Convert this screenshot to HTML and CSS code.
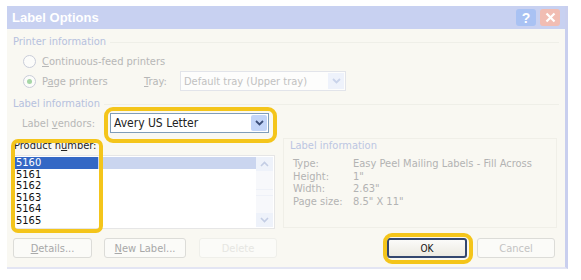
FILE: index.html
```html
<!DOCTYPE html>
<html lang="en">
<head>
  <meta charset="UTF-8">
  <title>Label Options</title>
  <link rel="stylesheet" href="styles.css">
</head>
<body>
  <div class="dialog">
    <div class="titlebar">
      <span class="title">Label Options</span>
      <span class="tb-btn help">?</span>
      <span class="tb-btn close">
        <svg width="11" height="11" viewBox="0 0 11 11"><path d="M1.5 1.5 L9.5 9.5 M9.5 1.5 L1.5 9.5" stroke="#fff" stroke-width="2.2" fill="none"/></svg>
      </span>
    </div>

    <div class="group-head">Printer information</div>
    <div class="row">
      <span class="radio"></span>
      <span><u>C</u>ontinuous-feed printers</span>
    </div>
    <div class="row">
      <span class="radio on"></span>
      <span class="radio-text">P<u>a</u>ge printers</span>
      <span class="tray-label"><u>T</u>ray:</span>
      <span class="combo tray-combo">
        <span class="combo-text">Default tray (Upper tray)</span>
        <span class="combo-btn">
          <svg width="9" height="6" viewBox="0 0 9 6"><path d="M1 1 L4.5 4.5 L8 1" stroke="#c9d3ea" stroke-width="1.8" fill="none"/></svg>
        </span>
      </span>
    </div>

    <div class="group-head">Label information</div>
    <div class="row vendors">
      <span class="vendors-label">Label <u>v</u>endors:</span>
      <span class="combo vendor-combo">
        <span class="combo-text">Avery US Letter</span>
        <span class="combo-btn">
          <svg width="9" height="6" viewBox="0 0 9 6"><path d="M1 1 L4.5 4.5 L8 1" stroke="#3c4f7a" stroke-width="1.8" fill="none"/></svg>
        </span>
      </span>
    </div>

    <div class="lower">
      <div class="products">
        <div class="products-label">Product n<u>u</u>mber:</div>
        <div class="listbox">
          <ul class="items">
            <li class="selected">5160</li>
            <li>5161</li>
            <li>5162</li>
            <li>5163</li>
            <li>5164</li>
            <li>5165</li>
          </ul>
          <div class="scrollbar">
            <span class="sb-btn">
              <svg width="9" height="6" viewBox="0 0 9 6"><path d="M1 5 L4.5 1.5 L8 5" stroke="#c3cde4" stroke-width="1.6" fill="none"/></svg>
            </span>
            <span class="sb-track"><span class="sb-grip"></span></span>
            <span class="sb-btn">
              <svg width="9" height="6" viewBox="0 0 9 6"><path d="M1 1 L4.5 4.5 L8 1" stroke="#c3cde4" stroke-width="1.6" fill="none"/></svg>
            </span>
          </div>
        </div>
      </div>
      <div class="info">
        <div class="info-head">Label information</div>
        <div class="info-grid">
          <span>Type:</span><span>Easy Peel Mailing Labels - Fill Across</span>
          <span>Height:</span><span>1"</span>
          <span>Width:</span><span>2.63"</span>
          <span>Page size:</span><span>8.5" X 11"</span>
        </div>
      </div>
    </div>

    <div class="buttons">
      <span class="btn details"><u>D</u>etails...</span>
      <span class="btn new-label"><u>N</u>ew Label...</span>
      <span class="btn delete">Delete</span>
      <span class="btn ok">OK</span>
      <span class="btn cancel">Cancel</span>
    </div>

    <div class="hl hl-vendor"></div>
    <div class="hl hl-products"></div>
    <div class="hl hl-ok"></div>
  </div>
</body>
</html>
```

FILE: styles.css
```css
body {
  margin: 0;
  background: #fff;
}
.dialog {
  position: relative;
  margin: 6px 0 0 7px;
  width: 561px;
  height: 263px;
  box-sizing: border-box;
  background: #f9f8f2;
  border-right: 3px solid #c9cfee;
  border-bottom: 2px solid #e3e5f3;
  display: flex;
  flex-direction: column;
  font-family: "DejaVu Sans Condensed", "DejaVu Sans", sans-serif;
  font-size: 11px;
  color: #b7b7b7;
}
u {
  text-decoration: underline;
}

/* title bar */
.titlebar {
  height: 23px;
  background: #c8d1f1;
  display: flex;
  align-items: center;
  padding: 0 5px 0 5px;
}
.title {
  flex: 1;
  font-family: "Liberation Sans", sans-serif;
  font-weight: bold;
  font-size: 13px;
  color: #fff;
}
.tb-btn {
  width: 20px;
  height: 17px;
  border-radius: 3px;
  display: flex;
  align-items: center;
  justify-content: center;
  color: #fff;
  font-family: "Liberation Sans", sans-serif;
  font-weight: bold;
  font-size: 14px;
}
.help {
  background: #a9c2f3;
  margin-right: 4px;
}
.close {
  background: #f1bdb3;
}

/* groups */
.group-head {
  margin-top: 6px;
  height: 14px;
  line-height: 14px;
  padding-left: 6px;
  color: #b6c1de;
  display: flex;
  align-items: center;
  gap: 4px;
}
.group-head::after {
  content: "";
  flex: 1;
  height: 1px;
  margin-right: 6px;
  background: #efefe8;
}
.row {
  height: 20px;
  display: flex;
  align-items: center;
  padding-left: 16px;
}
.group-head + .row {
  margin-top: 2px;
}
.radio {
  width: 11px;
  height: 11px;
  border: 1px solid #c9cdd9;
  border-radius: 50%;
  background: #fcfcfa;
  margin-right: 6px;
  display: flex;
  align-items: center;
  justify-content: center;
}
.radio.on::after {
  content: "";
  width: 5px;
  height: 5px;
  border-radius: 50%;
  background: #a6d6a6;
}
.radio-text {
  width: 102px;
}
.tray-label {
  width: 36px;
}

/* combo boxes */
.combo {
  display: flex;
  align-items: center;
  box-sizing: border-box;
  background: #fff;
}
.combo-text {
  flex: 1;
  padding-left: 3px;
  white-space: nowrap;
}
.combo-btn {
  width: 16px;
  align-self: stretch;
  margin: 1px;
  display: flex;
  align-items: center;
  justify-content: center;
}
.tray-combo {
  width: 166px;
  height: 20px;
  border: 1px solid #e2e4ea;
  background: #fdfdfc;
}
.tray-combo .combo-text {
  color: #c1c1c1;
}
.tray-combo .combo-btn {
  background: #eef2fb;
}
.vendors {
  margin-top: 5px;
  padding-left: 15px;
}
.vendors-label {
  width: 88px;
}
.vendor-combo {
  width: 159px;
  height: 20px;
  border: 1px solid #7f9db9;
  font-size: 12px;
  color: #222;
}
.vendor-combo .combo-btn {
  background: #c3d5f8;
  border-radius: 2px;
}

/* lower part */
.lower {
  margin-top: 5px;
  display: flex;
  padding-left: 5px;
  gap: 8px;
}
.products {
  width: 263px;
}
.products-label {
  height: 16px;
  line-height: 16px;
  padding-left: 2px;
  font-size: 11px;
  color: #222;
}
.listbox {
  margin-top: 1px;
  height: 74px;
  box-sizing: border-box;
  border: 1px solid #e6e6e6;
  background: #fff;
  display: flex;
}
.items {
  flex: 1;
  list-style: none;
  margin: 0;
  padding: 1px 0 0 2px;
  font-size: 11px;
  color: #111;
}
.items li {
  height: 11.5px;
  line-height: 11.5px;
  padding-left: 1px;
}
.items li.selected {
  color: #fff;
  background: linear-gradient(90deg, #3468c5 0 83px, #cad5ef 83px);
}
.scrollbar {
  width: 17px;
  margin: 1px 1px 1px 0;
  background: #f7f8fb;
  display: flex;
  flex-direction: column;
}
.sb-btn {
  height: 14px;
  background: #eef2fa;
  display: flex;
  align-items: center;
  justify-content: center;
}
.sb-track {
  flex: 1;
  display: flex;
  align-items: center;
}
.sb-grip {
  width: 100%;
  height: 5px;
  border-top: 1px solid #eef1f8;
  border-bottom: 1px solid #eef1f8;
}
.info {
  width: 274px;
  height: 90px;
  box-sizing: border-box;
  border: 1px solid #f0efe8;
  padding: 0 0 0 6px;
}
.info-head {
  height: 14px;
  line-height: 14px;
  color: #bcc6e2;
}
.info-grid {
  margin-top: 5px;
  padding-left: 3px;
  display: grid;
  grid-template-columns: 60px 1fr;
  grid-auto-rows: 12.5px;
  line-height: 12.5px;
  color: #b3b3b3;
  white-space: nowrap;
}

/* buttons */
.buttons {
  margin-top: 9px;
  height: 20px;
  display: flex;
  padding: 0 10px 0 6px;
}
.btn {
  box-sizing: border-box;
  height: 20px;
  border: 1px solid #dcdcd8;
  border-radius: 3px;
  background: #fbfbf8;
  display: flex;
  align-items: center;
  justify-content: center;
  color: #a8a8a8;
}
.details {
  width: 79px;
}
.new-label {
  width: 82px;
  margin-left: 12px;
}
.delete {
  width: 78px;
  margin-left: 13px;
  border-color: #efefea;
  color: #e6e6e2;
}
.ok {
  width: 80px;
  margin-left: auto;
  border: 2px solid #33476f;
  background: linear-gradient(#fbfbf9, #eceae2);
  color: #111;
  font-size: 10px;
}
.cancel {
  width: 78px;
  margin-left: 10px;
  color: #c3c3c3;
}

/* yellow call-out frames drawn over the dialog */
.hl {
  position: absolute;
  box-sizing: border-box;
  border: 4px solid #f4c51b;
  border-radius: 9px;
}
.hl-vendor {
  left: 97px;
  top: 101px;
  width: 173px;
  height: 36px;
}
.hl-products {
  left: 4px;
  top: 133px;
  width: 92px;
  height: 94px;
  border-radius: 7px;
}
.hl-ok {
  left: 376px;
  top: 227px;
  width: 90px;
  height: 31px;
}
```
